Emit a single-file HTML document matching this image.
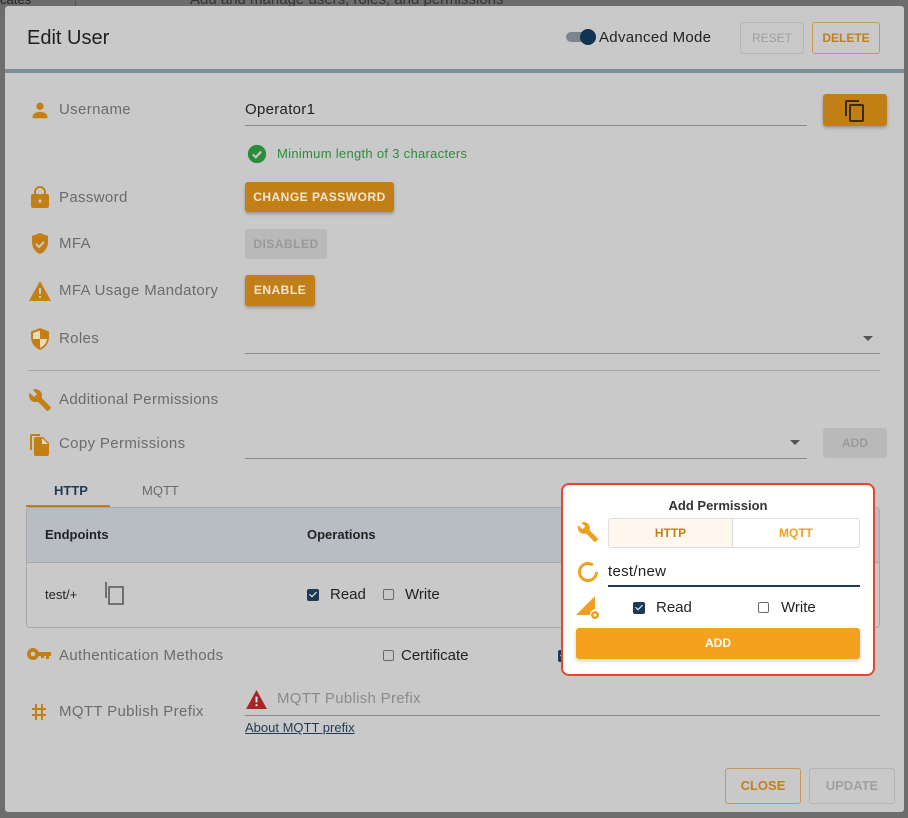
<!DOCTYPE html>
<html><head><meta charset="utf-8"><style>
*{box-sizing:border-box;margin:0;padding:0}
body{width:908px;height:818px;background:#6d6d6d;font-family:"Liberation Sans",sans-serif;position:relative;overflow:hidden;color:#2a2a2a}
.a{position:absolute}
.dlg{left:5px;top:6px;width:899px;height:806px;background:#c9c9c9;border-radius:3px}
.lbl{font-size:15px;color:#6b6b6b;letter-spacing:.35px}
.ico{fill:#c27f16}
.btn{position:absolute;border-radius:3px;font-size:12px;font-weight:bold;letter-spacing:.5px;text-align:center;color:#f3e7d4;background:#c27f16;box-shadow:0 2px 3px rgba(0,0,0,.25)}
.line{position:absolute;height:1px;background:#8a8a8a}
.cb{position:absolute;width:11px;height:11px;border:1.5px solid #6a6a6a;border-radius:2px}
.cbk{position:absolute;width:12px;height:12px;background:#1e3a55;border-radius:2px}
.cbk:after{content:"";position:absolute;left:3.5px;top:1px;width:3px;height:6px;border:solid #fff;border-width:0 1.5px 1.5px 0;transform:rotate(45deg)}
</style></head><body>
<div class="a" style="left:0;top:0;font-size:13px;color:#222;top:-8px">cates</div>
<div class="a" style="left:75px;top:0;width:1px;height:6px;background:#555"></div>
<div class="a" style="left:190px;top:-9px;font-size:15px;color:#333">Add and manage users, roles, and permissions</div>
<div class="a dlg"></div>
<div class="a" style="left:27px;top:27px;font-size:20px;color:#1f1f1f">Edit User</div>
<div class="a" style="left:566px;top:32px;width:28px;height:10px;border-radius:5px;background:#7a8590"></div>
<div class="a" style="left:580px;top:29px;width:16px;height:16px;border-radius:50%;background:#0f3552"></div>
<div class="a" style="left:599px;top:29px;font-size:15px;color:#222;letter-spacing:.3px">Advanced Mode</div>
<div class="a" style="left:740px;top:22px;width:64px;height:32px;border:1px solid #b5b5b5;border-radius:3px;font-size:12px;color:#a0a0a0;text-align:center;line-height:30px">RESET</div>
<div class="a" style="left:812px;top:22px;width:68px;height:32px;border:1px solid #c9955a;border-radius:3px;font-size:12px;color:#c27f16;text-align:center;line-height:30px;font-weight:bold">DELETE</div>
<div class="a" style="left:5px;top:69px;width:899px;height:4px;background:#7f8d96"></div>

<!-- Username -->
<svg class="a" style="left:29px;top:99px" width="22" height="22" viewBox="0 0 24 24"><path class="ico" d="M12 12a4 4 0 1 0 0-8 4 4 0 0 0 0 8zm0 2c-3 0-8 1.5-8 4.5V21h16v-2.5c0-3-5-4.5-8-4.5z"/></svg>
<div class="a lbl" style="left:59px;top:101px">Username</div>
<div class="a" style="left:245px;top:101px;font-size:15px;color:#222;letter-spacing:.3px">Operator1</div>
<div class="line" style="left:245px;top:125px;width:562px"></div>
<div class="btn" style="left:823px;top:94px;width:64px;height:32px"></div>
<svg class="a" style="left:843px;top:99px" width="24" height="24" viewBox="0 0 24 24"><path fill="#3a2a10" d="M16 1H4a2 2 0 0 0-2 2v14h2V3h12V1zm3 4H8a2 2 0 0 0-2 2v14a2 2 0 0 0 2 2h11a2 2 0 0 0 2-2V7a2 2 0 0 0-2-2zm0 16H8V7h11v14z"/></svg>
<svg class="a" style="left:247px;top:144px" width="20" height="20" viewBox="0 0 24 24"><circle cx="12" cy="12" r="11" fill="#2e8b3c"/><path d="M7 12.5l3.5 3.5L17 9" stroke="#c9c9c9" stroke-width="2.5" fill="none"/></svg>
<div class="a" style="left:277px;top:146px;font-size:13px;color:#2e8b3c;letter-spacing:.3px">Minimum length of 3 characters</div>

<!-- Password -->
<svg class="a" style="left:30px;top:185px" width="20" height="24" viewBox="0 0 20 24"><path class="ico" d="M4 9V7a6 6 0 0 1 12 0v2h1a2 2 0 0 1 2 2v10a2 2 0 0 1-2 2H3a2 2 0 0 1-2-2V11a2 2 0 0 1 2-2h1zm2 0h8V7a4 4 0 0 0-8 0v2z"/><circle cx="10" cy="16" r="1.6" fill="#c9c9c9"/></svg>
<div class="a lbl" style="left:59px;top:189px">Password</div>
<div class="btn" style="left:245px;top:182px;width:149px;height:30px;line-height:30px">CHANGE PASSWORD</div>
<!-- MFA -->
<svg class="a" style="left:31px;top:233px" width="18" height="22" viewBox="0 0 18 22"><path class="ico" d="M9 0L1 3v6c0 5.5 3.4 10.5 8 12 4.6-1.5 8-6.5 8-12V3z"/><path d="M5 11l3 3 5-5" stroke="#c9c9c9" stroke-width="2" fill="none"/></svg>
<div class="a lbl" style="left:59px;top:235px">MFA</div>
<div class="a" style="left:245px;top:229px;width:82px;height:30px;border-radius:3px;background:#b9b9b9;color:#999;font-size:12px;font-weight:bold;text-align:center;line-height:30px;letter-spacing:.5px">DISABLED</div>
<!-- MFA Usage -->
<svg class="a" style="left:29px;top:281px" width="22" height="20" viewBox="0 0 22 20"><path class="ico" d="M11 0L0 20h22z"/><rect x="10" y="7" width="2" height="6" fill="#c9c9c9"/><rect x="10" y="15" width="2" height="2" fill="#c9c9c9"/></svg>
<div class="a lbl" style="left:59px;top:282px">MFA Usage Mandatory</div>
<div class="btn" style="left:245px;top:275px;width:70px;height:31px;line-height:30px">ENABLE</div>
<!-- Roles -->
<svg class="a" style="left:30px;top:328px" width="20" height="22" viewBox="0 0 20 22"><path class="ico" d="M10 0L1 3.5v6C1 15 5 20 10 22c5-2 9-7 9-12.5v-6z"/><path d="M10 2.5v8.5H3V5zM10 11h7c-.3 4-3.2 7.5-7 8.8z" fill="#ecd9b8"/></svg>
<div class="a lbl" style="left:59px;top:330px">Roles</div>
<div class="line" style="left:245px;top:353px;width:635px"></div>
<div class="a" style="left:863px;top:336px;width:0;height:0;border-left:5px solid transparent;border-right:5px solid transparent;border-top:5px solid #555"></div>
<div class="a" style="left:28px;top:370px;width:852px;height:1px;background:#a6a6a6"></div>
<!-- Additional -->
<svg class="a" style="left:28px;top:388px" width="24" height="24" viewBox="0 0 24 24"><path class="ico" d="M22.7 19l-9.1-9.1c.9-2.3.4-5-1.5-6.9-2-2-5-2.4-7.4-1.3L9 6 6 9 1.6 4.7C.4 7.1.9 10.1 2.9 12.1c1.9 1.9 4.6 2.4 6.9 1.5l9.1 9.1c.4.4 1 .4 1.4 0l2.3-2.3c.5-.4.5-1.1.1-1.4z"/></svg>
<div class="a lbl" style="left:59px;top:391px">Additional Permissions</div>
<svg class="a" style="left:29px;top:432px" width="21" height="24" viewBox="0 0 21 24"><path class="ico" d="M3 2h8v2H3v14H1V4a2 2 0 0 1 2-2z"/><path class="ico" d="M7 5h7l6 6v11a2 2 0 0 1-2 2H7a2 2 0 0 1-2-2V7a2 2 0 0 1 2-2z"/><path d="M13 6v6h6" fill="#ecd9b8"/></svg>
<div class="a lbl" style="left:59px;top:435px">Copy Permissions</div>
<div class="line" style="left:245px;top:458px;width:562px"></div>
<div class="a" style="left:790px;top:440px;width:0;height:0;border-left:5px solid transparent;border-right:5px solid transparent;border-top:5px solid #555"></div>
<div class="a" style="left:823px;top:428px;width:64px;height:30px;border-radius:3px;background:#b9b9b9;color:#999;font-size:12px;font-weight:bold;text-align:center;line-height:30px">ADD</div>

<!-- Tabs -->
<div class="a" style="left:54px;top:483px;font-size:13px;font-weight:bold;color:#1e3a55">HTTP</div>
<div class="a" style="left:142px;top:483px;font-size:13px;color:#6b6b6b">MQTT</div>
<div class="a" style="left:26px;top:505px;width:84px;height:2px;background:#c27f16"></div>
<div class="a" style="left:26px;top:507px;width:854px;height:121px;border:1px solid #a8a8a8;border-radius:4px;overflow:hidden">
<div style="height:55px;background:#b8bcc3;border-bottom:1px solid #a8a8a8"></div></div>
<div class="a" style="left:45px;top:527px;font-size:13px;font-weight:bold;color:#222">Endpoints</div>
<div class="a" style="left:307px;top:527px;font-size:13px;font-weight:bold;color:#222">Operations</div>
<div class="a" style="left:45px;top:587px;font-size:13px;color:#222">test/+</div>
<svg class="a" style="left:104px;top:581px" width="22" height="24" viewBox="0 0 22 24"><path d="M2 1v16M5 6h14v17H5z" stroke="#666" stroke-width="1.8" fill="none"/></svg>
<div class="cbk" style="left:307px;top:589px"></div>
<div class="a" style="left:330px;top:586px;font-size:15px;color:#222">Read</div>
<div class="cb" style="left:383px;top:589px"></div>
<div class="a" style="left:405px;top:586px;font-size:15px;color:#222">Write</div>

<!-- Auth -->
<svg class="a" style="left:27px;top:648px" width="24" height="14" viewBox="0 0 24 14"><path class="ico" d="M6 0a6 6 0 1 1 0 12A6 6 0 0 1 6 0zm5.5 4H24v4h-2v3h-3V8h-2v2h-3V8h-2.5z"/><circle cx="6" cy="6" r="2.3" fill="#c9c9c9"/></svg>
<div class="a lbl" style="left:59px;top:647px">Authentication Methods</div>
<div class="cb" style="left:383px;top:650px"></div>
<div class="a" style="left:401px;top:647px;font-size:15px;color:#222">Certificate</div>
<div class="cbk" style="left:558px;top:650px"></div>
<!-- MQTT prefix -->
<svg class="a" style="left:31px;top:703px" width="16" height="18" viewBox="0 0 16 18"><path d="M5 1v16M11 1v16M1 6h14M1 12h14" stroke="#c27f16" stroke-width="2" fill="none"/></svg>
<div class="a lbl" style="left:59px;top:703px">MQTT Publish Prefix</div>
<svg class="a" style="left:246px;top:690px" width="21" height="19" viewBox="0 0 22 20"><path fill="#a82424" d="M11 0L0 20h22z"/><rect x="10" y="7" width="2" height="6" fill="#eee"/><rect x="10" y="15" width="2" height="2" fill="#eee"/></svg>
<div class="a" style="left:277px;top:690px;font-size:15px;color:#8a8a8a;letter-spacing:.3px">MQTT Publish Prefix</div>
<div class="line" style="left:245px;top:715px;width:635px"></div>
<div class="a" style="left:245px;top:720px;font-size:13px;color:#1e3a55;text-decoration:underline">About MQTT prefix</div>

<div class="a" style="left:725px;top:768px;width:76px;height:36px;border:1px solid #c9955a;border-radius:3px;font-size:13px;font-weight:bold;color:#c27f16;text-align:center;line-height:34px">CLOSE</div>
<div class="a" style="left:809px;top:768px;width:86px;height:36px;border:1px solid #b5b5b5;border-radius:3px;font-size:13px;font-weight:bold;color:#a0a0a0;text-align:center;line-height:34px">UPDATE</div>

<!-- Popup -->
<div class="a" style="left:561px;top:483px;width:314px;height:193px;background:#fff;border:2.5px solid #e8452c;border-radius:8px"></div>
<div class="a" style="left:562px;top:498px;width:312px;text-align:center;font-size:13px;font-weight:bold;color:#333">Add Permission</div>
<svg class="a" style="left:577px;top:521px" width="22" height="22" viewBox="0 0 24 24"><path fill="#f0a020" d="M22.7 19l-9.1-9.1c.9-2.3.4-5-1.5-6.9-2-2-5-2.4-7.4-1.3L9 6 6 9 1.6 4.7C.4 7.1.9 10.1 2.9 12.1c1.9 1.9 4.6 2.4 6.9 1.5l9.1 9.1c.4.4 1 .4 1.4 0l2.3-2.3c.5-.4.5-1.1.1-1.4z"/></svg>
<div class="a" style="left:608px;top:518px;width:252px;height:30px;border:1px solid #ddd;border-radius:3px;overflow:hidden;display:flex;font-size:12px;font-weight:bold">
<div style="width:124px;background:#fff6ee;color:#c27f16;text-align:center;line-height:28px;border-right:1px solid #ddd">HTTP</div>
<div style="flex:1;color:#f0a020;text-align:center;line-height:28px">MQTT</div></div>
<svg class="a" style="left:577px;top:561px" width="22" height="22" viewBox="0 0 22 22"><circle cx="11" cy="11" r="8.5" fill="none" stroke="#f0a020" stroke-width="3" stroke-dasharray="45 8"/></svg>
<div class="a" style="left:608px;top:563px;font-size:15px;color:#222;letter-spacing:.3px">test/new</div>
<div class="a" style="left:608px;top:585px;width:252px;height:2px;background:#1e3a55"></div>
<svg class="a" style="left:576px;top:596px" width="26" height="24" viewBox="0 0 26 24"><path fill="#f0a020" d="M19 0L0 19h14a6 6 0 0 1 5-6z"/><circle cx="19" cy="19" r="4" fill="#f0a020"/><circle cx="19" cy="19" r="1.5" fill="#fff"/></svg>
<div class="cbk" style="left:633px;top:602px"></div>
<div class="a" style="left:656px;top:599px;font-size:15px;color:#222">Read</div>
<div class="cb" style="left:758px;top:602px"></div>
<div class="a" style="left:781px;top:599px;font-size:15px;color:#222">Write</div>
<div class="a" style="left:576px;top:628px;width:284px;height:31px;background:#f4a21e;border-radius:3px;color:#fff;font-size:12px;font-weight:bold;text-align:center;line-height:31px;box-shadow:0 2px 4px rgba(0,0,0,.2)">ADD</div>
</body></html>
